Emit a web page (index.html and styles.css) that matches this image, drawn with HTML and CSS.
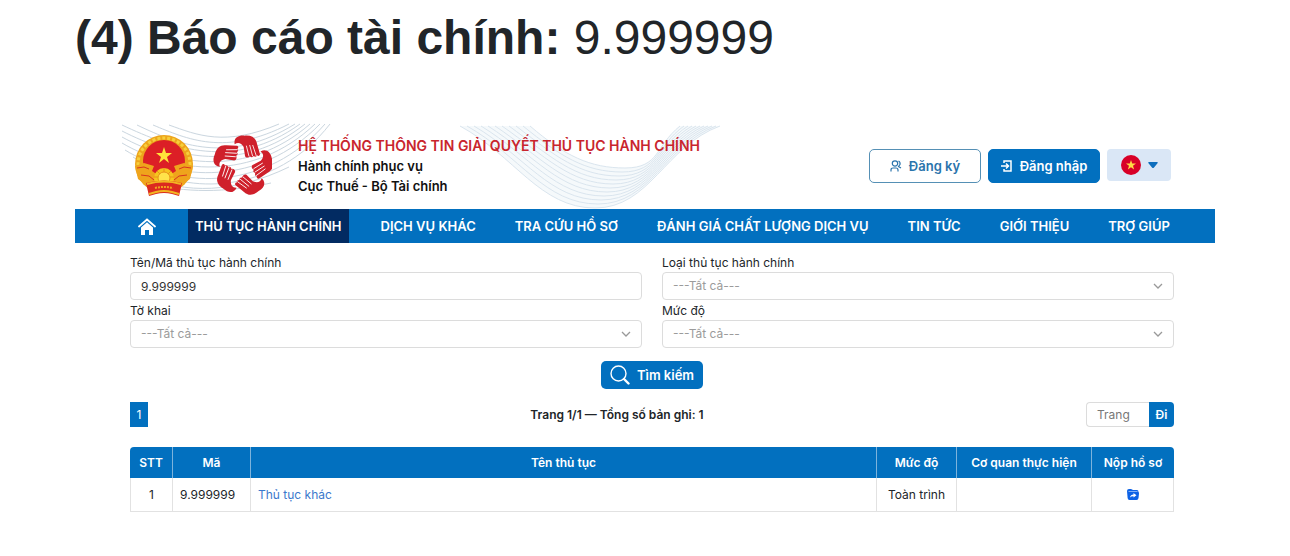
FILE: index.html
```html
<!DOCTYPE html>
<html lang="vi">
<head>
    <meta charset="UTF-8">
    <meta name="viewport" content="width=device-width, initial-scale=1.0">
    <title>Hệ thống thông tin giải quyết thủ tục hành chính</title>
    <link rel="stylesheet" href="styles.css">
</head>
<body>
    <div class="page">
        <h1 class="page-title">(4) Báo cáo tài chính: <span>9.999999</span></h1>

        <div class="portal">
            <header class="header">
                <!-- background waves -->
                <svg class="waves" width="650" height="86" viewBox="0 0 650 86" fill="none" aria-hidden="true">
                    <g stroke="#a9bccb" stroke-width="1" opacity="0.6">
                        <path d="M66 42C110 72 200 72 255 1"/>
                        <path d="M58 34C105 66 192 68 250 1"/>
                        <path d="M50 27C100 58 184 64 245 1"/>
                        <path d="M47 20C98 50 178 60 240 1"/>
                        <path d="M47 14C98 42 172 56 235 1"/>
                        <path d="M47 8C98 34 166 52 230 1"/>
                        <path d="M47 2C98 26 160 48 225 1"/>
                        <path d="M62 2C104 22 154 42 220 1"/>
                        <path d="M78 2C112 16 150 34 214 1"/>
                        <path d="M94 2C122 12 150 24 204 1"/>
                        <path d="M68 52C110 72 160 70 214 44"/>
                        <path d="M72 60C110 70 150 70 196 60"/>
                    </g>
                    <g transform="translate(380 3)" stroke="#cbdbe8" stroke-width="1" opacity="0.7">
                        <path d="M5 0C60 30 85 82 140 82S210 20 265 0L225 0C200 20 205 42 170 42S110 30 75 0Z" fill="#dfeaf3" fill-opacity="0.4" stroke="none"/>
                        <path d="M5 0C60 30 85 82 140 82S210 20 265 0"/>
                        <path d="M12 0C65 30 90 78 143 78S209 20 261 0"/>
                        <path d="M19 0C70 30 95 74 146 74S208 20 257 0"/>
                        <path d="M26 0C75 30 100 70 149 70S207 20 253 0"/>
                        <path d="M33 0C80 30 105 66 152 66S206 20 249 0"/>
                        <path d="M40 0C85 30 110 62 155 62S205 20 245 0"/>
                        <path d="M47 0C90 30 115 58 158 58S204 20 241 0"/>
                        <path d="M54 0C95 30 120 54 161 54S203 20 237 0"/>
                        <path d="M61 0C100 30 125 50 164 50S202 20 233 0"/>
                        <path d="M68 0C105 30 130 46 167 46S201 20 229 0"/>
                        <path d="M75 0C110 30 135 42 170 42S200 20 225 0"/>
                    </g>
                </svg>

                <a class="brand" href="#">
                    <svg width="60" height="62" viewBox="0 0 60 62" aria-hidden="true">
                        <circle cx="30" cy="29" r="29" fill="#eda51c"/>
                        <circle cx="30" cy="29" r="26" fill="none" stroke="#f7cf3c" stroke-width="3" stroke-dasharray="3 2"/>
                        <circle cx="30" cy="26" r="21" fill="#dc1f26"/>
                        <path d="M30 12l2 6h6l-5 4 2 6-5-4-5 4 2-6-5-4h6z" fill="#ffe43a"/>
                        <path d="M1 31l9-3 10 3-2 5 6 4 1 9-10 3-11-8z" fill="#efa41c"/>
                        <path d="M59 31l-9-3-10 3 2 5-6 4-1 9 10 3 11-8z" fill="#efa41c"/>
                        <path d="M3 33l7-1 5 2M7 40l8 1 5 4M57 33l-7-1-5 2M53 40l-8 1-5 4" stroke="#d8331f" stroke-width="1" fill="none"/>
                        <circle cx="30" cy="43" r="10" fill="#f6c51f"/>
                        <circle cx="30" cy="43" r="6" fill="#ffe34a" stroke="#e9941b"/>
                        <path d="M30 33v4M23 36l3 3M37 36l-3 3M20 42h4M36 42h4" stroke="#e9941b"/>
                        <path d="M12 48q18-5 36 0l-3 13-7-2q-8-2-16 0l-7 2z" fill="#db2a20"/>
                        <path d="M13 49q17-5 34 0M15 59l7-2q8-2 16 0l7 2" stroke="#f2b522" stroke-width="2" fill="none"/>
                        <path d="M21 53q9-2 18 0" stroke="#f2a31f" stroke-width="2" fill="none" stroke-dasharray="2 1"/>
                    </svg>
                    <svg class="hands" width="60" height="62" viewBox="-92 -92 180 186" aria-hidden="true">
                        <defs>
                            <g id="hand">
                                <path d="M-24 -64C-28 -84 -12 -92 6 -90C28 -92 40 -82 43 -66L52 -34C51 -29 46 -28 44 -31C42 -26 36 -26 33 -29C30 -24 25 -24 22 -28C18 -23 9 -23 7 -29L3 -56C-4 -68 -14 -72 -24 -64Z" fill="#cf202b"/>
                                <path d="M11 -60L19 -28M21 -62L30 -28M30 -62L41 -29" stroke="#fff" stroke-width="2.500"/>
                            </g>
                        </defs>
                        <use href="#hand"/>
                        <use href="#hand" transform="rotate(72)"/>
                        <use href="#hand" transform="rotate(144)"/>
                        <use href="#hand" transform="rotate(216)"/>
                        <use href="#hand" transform="rotate(288)"/>
                    </svg>
                    <span class="brand-text">
                        <strong class="brand-name">HỆ THỐNG THÔNG TIN GIẢI QUYẾT THỦ TỤC HÀNH CHÍNH</strong>
                        <span>Hành chính phục vụ</span>
                        <span>Cục Thuế - Bộ Tài chính</span>
                    </span>
                </a>

                <div class="actions">
                    <button class="btn btn-outline" type="button">
                        <svg width="12" height="12" viewBox="0 0 12 12" fill="none" stroke="currentColor" stroke-width="1.200" aria-hidden="true">
                            <circle cx="5" cy="3.500" r="2.700"/>
                            <path d="M1 11.500V10Q1 8 3 8H6Q8 8 8 10V11.500M8.500 1Q10.500 2 10 4.500L8.500 6.500L11 8"/>
                        </svg>
                        Đăng ký
                    </button>
                    <button class="btn btn-primary" type="button">
                        <svg width="12" height="12" viewBox="0 0 12 12" fill="none" stroke="currentColor" stroke-width="1.500" aria-hidden="true">
                            <path d="M3 3V1H10V11H3V9M0 6H7M5 3.500L7.500 6L5 8.500"/>
                        </svg>
                        Đăng nhập
                    </button>
                    <button class="lang" type="button" aria-label="Tiếng Việt">
                        <svg width="20" height="20" viewBox="0 0 20 20" aria-hidden="true">
                            <circle cx="10" cy="10" r="10" fill="#d80027"/>
                            <path d="M10 5l1.200 3.600h3.800l-3 2.200 1.100 3.600-3.100-2.200-3.100 2.200 1.100-3.600-3-2.200h3.800z" fill="#ffda44"/>
                        </svg>
                        <svg width="10" height="6" viewBox="0 0 10 6" aria-hidden="true">
                            <path d="M1 0H9Q10.500 0 9.500 1.200L6 5.500Q5 6.500 4 5.500L.5 1.200Q-.5 0 1 0Z" fill="#0d6ebd"/>
                        </svg>
                    </button>
                </div>
            </header>

            <nav class="nav">
                <a class="home" href="#" aria-label="Trang chủ">
                    <svg width="18" height="17" viewBox="0 0 18 17" fill="none" aria-hidden="true">
                        <path d="M1 8.500L9 1.500L17 8.500" stroke="#fff" stroke-width="1.800" stroke-linecap="round"/>
                        <path d="M3 9.500L9 4.300L15 9.500V17H11V12H7V17H3Z" fill="#fff"/>
                    </svg>
                </a>
                <a class="active" href="#">THỦ TỤC HÀNH CHÍNH</a>
                <a href="#">DỊCH VỤ KHÁC</a>
                <a href="#">TRA CỨU HỒ SƠ</a>
                <a href="#">ĐÁNH GIÁ CHẤT LƯỢNG DỊCH VỤ</a>
                <a href="#">TIN TỨC</a>
                <a href="#">GIỚI THIỆU</a>
                <a href="#">TRỢ GIÚP</a>
            </nav>

            <main class="content">
                <!-- search form -->
                <form class="search">
                    <div class="fields">
                        <div class="field">
                            <label for="keyword">Tên/Mã thủ tục hành chính</label>
                            <input type="text" id="keyword" value="9.999999">
                        </div>
                        <div class="field">
                            <label for="kind">Loại thủ tục hành chính</label>
                            <select id="kind"><option>---Tất cả---</option></select>
                        </div>
                        <div class="field">
                            <label for="declaration">Tờ khai</label>
                            <select id="declaration"><option>---Tất cả---</option></select>
                        </div>
                        <div class="field">
                            <label for="level">Mức độ</label>
                            <select id="level"><option>---Tất cả---</option></select>
                        </div>
                    </div>
                    <button class="search-btn" type="button">
                        <svg width="20" height="20" viewBox="0 0 20 20" fill="none" stroke="#fff" stroke-linecap="round" aria-hidden="true">
                            <circle cx="8.500" cy="8.500" r="7.500" stroke-width="1.400"/>
                            <path d="M14 14L18.500 18.500" stroke-width="2.400"/>
                        </svg>
                        Tìm kiếm
                    </button>
                </form>

                <!-- pagination -->
                <div class="pager">
                    <a class="page-number" href="#">1</a>
                    <strong>Trang 1/1 — Tổng số bản ghi: 1</strong>
                    <form class="goto">
                        <input type="text" placeholder="Trang" aria-label="Trang">
                        <button type="button">Đi</button>
                    </form>
                </div>

                <table class="results">
                    <colgroup>
                        <col class="col-index">
                        <col class="col-code">
                        <col>
                        <col class="col-level">
                        <col class="col-agency">
                        <col class="col-submit">
                    </colgroup>
                    <thead>
                        <tr>
                            <th>STT</th>
                            <th>Mã</th>
                            <th>Tên thủ tục</th>
                            <th>Mức độ</th>
                            <th>Cơ quan thực hiện</th>
                            <th>Nộp hồ sơ</th>
                        </tr>
                    </thead>
                    <tbody>
                        <tr>
                            <td class="center">1</td>
                            <td>9.999999</td>
                            <td><a href="#">Thủ tục khác</a></td>
                            <td class="center">Toàn trình</td>
                            <td></td>
                            <td class="center">
                                <a class="submit" href="#" aria-label="Nộp hồ sơ">
                                    <svg width="12" height="11" viewBox="0 0 12 11" aria-hidden="true">
                                        <path d="M0 2Q0 0 2 0H4L6 1H10Q11.500 1 11.500 3Q12 3 12 4.500L11.500 9Q11.300 11 9.500 11H2.500Q.8 11 .6 9Z" fill="#0d62e6"/>
                                        <path d="M1.500 2.500H10.500" stroke="#9cc0f7" stroke-width="0.800"/>
                                        <path d="M3 8.500Q3.500 5.500 6.500 5.500V4L9.500 6.300L6.500 8.500V7.200Q4.500 7 3 8.500Z" fill="#fff"/>
                                    </svg>
                                </a>
                            </td>
                        </tr>
                    </tbody>
                </table>
            </main>
        </div>
    </div>
</body>
</html>
```
FILE: styles.css
```css
* {
    box-sizing: border-box;
}
body {
    margin: 0;
    background: #fff;
    color: #212529;
    font-family: Inter, "Liberation Sans", sans-serif;
    font-size: 12px;
    line-height: 18px;
}
a {
    color: inherit;
    text-decoration: none;
}
button, input, select {
    font: inherit;
}
button {
    cursor: pointer;
}
.page {
    padding: 8px 75px 40px;
}
.page-title {
    margin: 0 0 55px;
    font-family: "Liberation Sans", Arial, sans-serif;
    font-size: 48px;
    line-height: 60px;
    color: #212529;
}
.page-title span {
    font-weight: 400;
}

/* Header */
.header {
    position: relative;
    display: flex;
    align-items: center;
    justify-content: space-between;
    min-height: 86px;
    padding: 0 44px 0 59px;
}
.waves {
    position: absolute;
    left: 0;
    top: 0;
}
.brand {
    position: relative;
    display: flex;
    align-items: center;
}
.hands {
    margin-left: 18px;
}
.brand-text {
    display: flex;
    flex-direction: column;
    margin-left: 26px;
    color: #111;
    font-size: 13px;
    line-height: 20px;
    font-weight: 600;
}
.brand-name {
    color: #c9252d;
    font-size: 14px;
    font-weight: 600;
}
.actions {
    display: flex;
    gap: 7px;
}
.btn {
    display: flex;
    align-items: center;
    justify-content: center;
    gap: 7px;
    width: 112px;
    height: 34px;
    padding: 0;
    border: 1px solid #0270bf;
    border-radius: 5px;
    font-size: 13px;
    font-weight: 600;
}
.btn-outline {
    background: #fff;
    border-color: #5590b5;
    color: #2a74ac;
}
.btn-primary {
    background: #0270bf;
    color: #fff;
}
.lang {
    display: flex;
    align-items: center;
    justify-content: center;
    gap: 7px;
    width: 64px;
    height: 32px;
    padding: 0;
    border: none;
    border-radius: 4px;
    background: #dae7f6;
}

/* Navigation */
.nav {
    display: flex;
    gap: 25px;
    height: 34px;
    padding-left: 56px;
    background: #0270bf;
    color: #fff;
    font-size: 13px;
    font-weight: 600;
    white-space: nowrap;
}
.nav a {
    display: flex;
    align-items: center;
    padding: 0 7px;
}
.nav .active {
    background: #022b62;
}

/* Search form */
.content {
    padding: 11px 41px 0 55px;
}
.search {
    display: flex;
    flex-direction: column;
    align-items: center;
    gap: 13px;
}
.fields {
    display: grid;
    grid-template-columns: 1fr 1fr;
    gap: 2px 20px;
    width: 100%;
}
.field {
    display: flex;
    flex-direction: column;
}
.field input, .field select {
    width: 100%;
    height: 28px;
    padding: 0 10px;
    border: 1px solid #dcdcdc;
    border-radius: 4px;
    background-color: #fff;
    color: #333;
}
.field select {
    appearance: none;
    background-image: url("data:image/svg+xml,%3Csvg xmlns='http://www.w3.org/2000/svg' width='10' height='6' fill='none' stroke='%23999' stroke-width='1.3'%3E%3Cpath d='M1 1l4 4 4-4'/%3E%3C/svg%3E");
    background-repeat: no-repeat;
    background-position: right 10px center;
    color: #9b9b9b;
}
.search-btn {
    display: flex;
    align-items: center;
    gap: 7px;
    height: 28px;
    padding: 0 9px;
    border: none;
    border-radius: 5px;
    background: #0270bf;
    color: #fff;
    font-size: 13px;
    font-weight: 600;
}

/* Pagination */
.pager {
    display: flex;
    align-items: center;
    justify-content: space-between;
    margin: 13px 0 20px;
}
.pager strong {
    font-weight: 600;
}
.page-number {
    width: 18px;
    line-height: 25px;
    background: #0270bf;
    color: #fff;
    text-align: center;
}
.goto {
    display: flex;
}
.goto input {
    width: 63px;
    height: 25px;
    padding: 0 10px;
    border: 1px solid #dcdcdc;
    border-right: none;
    border-radius: 4px 0 0 4px;
}
.goto input::placeholder {
    color: #777;
}
.goto button {
    width: 25px;
    padding: 0;
    border: none;
    border-radius: 0 4px 4px 0;
    background: #0270bf;
    color: #fff;
    font-weight: 600;
}

/* Results */
.results {
    width: 100%;
    table-layout: fixed;
    border-collapse: separate;
    border-spacing: 0;
}
.col-index {
    width: 43px;
}
.col-code {
    width: 78px;
}
.col-level {
    width: 80px;
}
.col-agency {
    width: 135px;
}
.col-submit {
    width: 82px;
}
.results th {
    height: 31px;
    padding: 0;
    border-right: 1px solid #7db3dc;
    background: #0270bf;
    color: #fff;
    font-weight: 600;
}
.results th:first-child {
    border-top-left-radius: 4px;
}
.results th:last-child {
    border-right: none;
    border-top-right-radius: 4px;
}
.results td {
    height: 34px;
    padding: 0 7px;
    border-right: 1px solid #e2e2e2;
    border-bottom: 1px solid #e2e2e2;
}
.results td:first-child {
    border-left: 1px solid #e2e2e2;
}
.results td a {
    color: #3b78cc;
}
.results .center {
    text-align: center;
}
.submit svg {
    display: block;
    margin: 0 auto;
}
```
